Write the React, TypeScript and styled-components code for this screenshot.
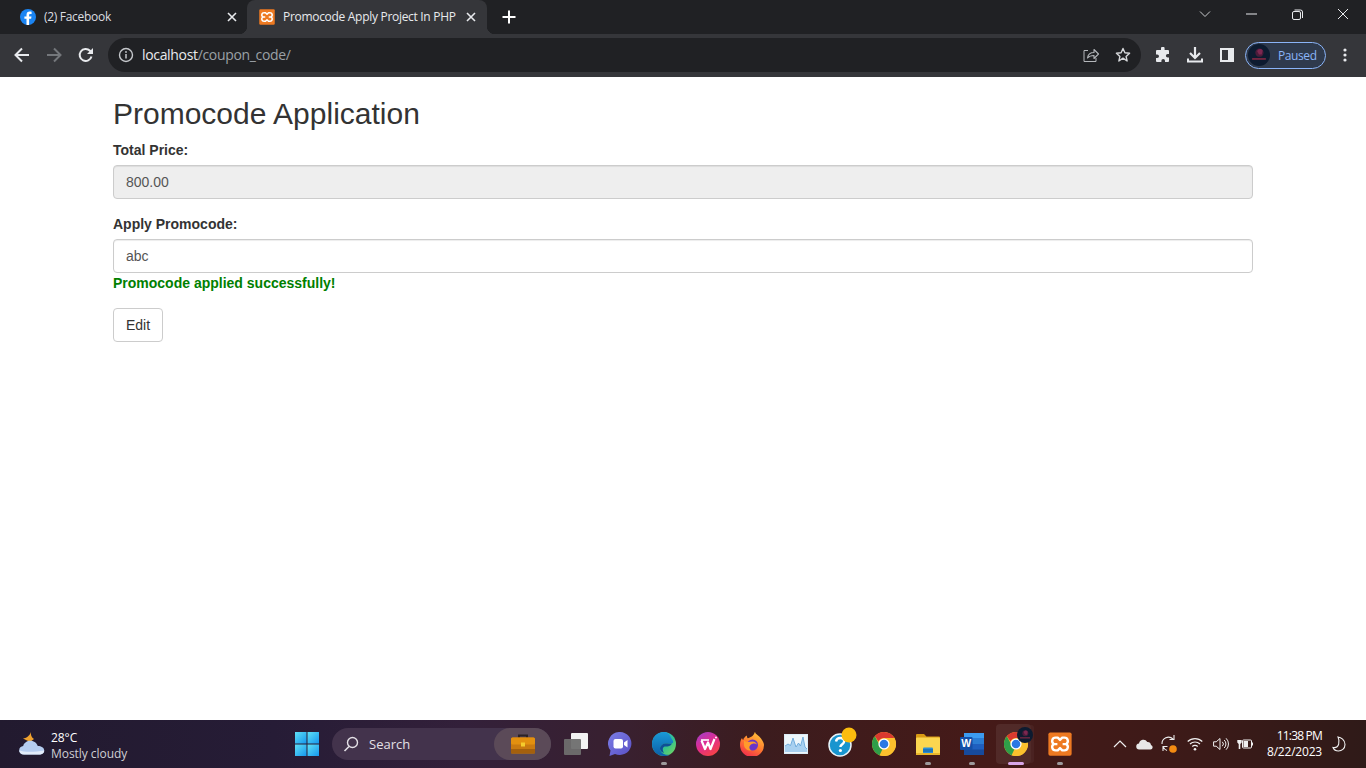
import React from 'react';
import styled, { createGlobalStyle } from 'styled-components';

const GlobalStyle = createGlobalStyle`
	html, body {
		margin: 0;
		padding: 0;
		background: #fff;
	}
	* {
		box-sizing: border-box;
	}
`;

const uiFont = `'Open Sans', 'Noto Sans', 'Liberation Sans', sans-serif`;

/* ---------- small drawings ---------- */

const XamppLogo = ({ size }: { size: number }) => (
	<svg width={size} height={size} viewBox="0 0 32 32">
		<rect x="0.5" y="0.5" width="31" height="31" rx="2.5" fill="#ee7a22" />
		<path
			d="M10 7.500h3l3 3 3-3h3c4.500 0 6 5.500 2.500 8.500 3.500 3 2 8.500-2.500 8.500h-3l-3-3-3 3h-3c-4.500 0-6-5.500-2.500-8.500C4 13 5.500 7.500 10 7.500z"
			fill="none"
			stroke="#fff"
			strokeWidth="3.200"
			strokeLinejoin="round"
		/>
		<path d="M7.500 16h5M19.500 16h5" stroke="#fff" strokeWidth="3" />
	</svg>
);

const FacebookLogo = () => (
	<svg width={16} height={16} viewBox="0 0 16 16">
		<circle cx="8" cy="8" r="8" fill="#1b84f2" />
		<path d="M9.100 16V9.800h2l.4-2.300H9.100V6.100c0-.8.3-1.200 1.200-1.200h1.300V2.800c-.5-.1-1.200-.2-1.900-.2-2 0-3.200 1.200-3.200 3.300v1.600H4.400v2.300h2.100V16z" fill="#fff" />
	</svg>
);

const ChromeLogo = ({ size }: { size: number }) => (
	<svg width={size} height={size} viewBox="0 0 24 24">
		<circle cx="12" cy="12" r="12" fill="#fbc02d" />
		<path d="M12 0a12 12 0 0 1 10.400 6H12a6 6 0 0 0-5.500 3.600L2.800 4.300A12 12 0 0 1 12 0z" fill="#d93a2f" />
		<path d="M2.800 4.300l4.700 8.400A5 5 0 0 0 10.500 17l-2.900 6.200A12 12 0 0 1 2.800 4.300z" fill="#2f9e48" />
		<path d="M7.600 23.200L12.800 18a6 6 0 0 0 4.400-9l-1-3h6.200A12 12 0 0 1 11 24a12 12 0 0 1-3.400-.8z" fill="#fbc02d" />
		<circle cx="12" cy="12" r="5.600" fill="#fff" />
		<circle cx="12" cy="12" r="4.300" fill="#2a78e4" />
	</svg>
);

const AvatarImage = ({ size }: { size: number }) => (
	<svg width={size} height={size} viewBox="0 0 24 24">
		<circle cx="12" cy="12" r="12" fill="#0d1b30" />
		<circle cx="12.500" cy="9.500" r="4.500" fill="#4a1c3a" />
		<path d="M10 8c1-3 4-3.500 6-1l-1 4.500h-3z" fill="#7d2750" />
		<rect x="4.500" y="15.500" width="15" height="1.600" fill="#8c2a46" />
	</svg>
);

const CloseGlyph = () => (
	<svg width={14} height={14} viewBox="0 0 14 14">
		<path d="M3 3l8 8M11 3l-8 8" stroke="#e8eaed" strokeWidth="1.600" />
	</svg>
);

const WeatherIcon = () => (
	<svg width={28} height={26} viewBox="0 0 28 26">
		<path d="M13 1c-.5 3 .5 5.500 3 7l-4 3-7-3.500c3-.2 6.500-2.500 8-6.500z" fill="#f0a22e" />
		<path d="M6 23.500c-3 0-4.800-2-4.800-4.300 0-2.300 1.800-4 4-4.200C6 11.800 9 9.800 12.500 9.800c3.600 0 6.300 2.300 7.300 5.200 3.500 0 6.400 1.600 6.400 4.400 0 2.500-2.300 4.100-5 4.100z" fill="#b5cdf0" />
		<path d="M6 23.500c-3 0-4.800-2-4.800-4.300 5 2 15 2 25 .2 0 2.500-2.300 4.100-5 4.100z" fill="#e2ecfa" />
	</svg>
);

const WindowsLogo = () => (
	<svg width={24} height={24} viewBox="0 0 24 24">
		<defs>
			<linearGradient id="winTile" x1="0" y1="0" x2="1" y2="1">
				<stop offset="0" stopColor="#5fe0f5" />
				<stop offset="1" stopColor="#1597ee" />
			</linearGradient>
		</defs>
		<rect x="0" y="0" width="11.500" height="11.500" fill="url(#winTile)" />
		<rect x="12.500" y="0" width="11.500" height="11.500" fill="url(#winTile)" />
		<rect x="0" y="12.500" width="11.500" height="11.500" fill="url(#winTile)" />
		<rect x="12.500" y="12.500" width="11.500" height="11.500" fill="url(#winTile)" />
	</svg>
);

const BriefcaseIcon = () => (
	<svg width={24} height={20} viewBox="0 0 24 20">
		<path d="M8 4V1.500h8V4" fill="none" stroke="#2b2226" strokeWidth="2" />
		<rect x="0" y="3.500" width="24" height="16" rx="1.500" fill="#c97a10" />
		<rect x="0" y="3.500" width="24" height="7" rx="1.500" fill="#e3900f" />
		<rect x="0" y="15" width="24" height="4.500" fill="#a4600d" />
		<rect x="10" y="8.500" width="4" height="4" fill="#f5cc2d" />
	</svg>
);

const TaskViewIcon = () => (
	<svg width={24} height={22} viewBox="0 0 24 22">
		<rect x="7" y="0" width="17" height="16" rx="1" fill="#f2f2f2" />
		<rect x="0" y="6" width="17" height="16" rx="1" fill="#6e6e6e" fillOpacity="0.95" />
	</svg>
);

const MeetIcon = () => (
	<svg width={24} height={24} viewBox="0 0 24 24">
		<defs>
			<linearGradient id="meetBg" x1="0" y1="0" x2="1" y2="1">
				<stop offset="0" stopColor="#7b7ee6" />
				<stop offset="1" stopColor="#5a4fc4" />
			</linearGradient>
		</defs>
		<path d="M12 0a11.500 11.500 0 1 1-5 21.900L1.500 24l1-5.500A11.500 11.500 0 0 1 12 0z" fill="url(#meetBg)" />
		<rect x="5.500" y="7" width="9.500" height="9.500" rx="2" fill="#fff" />
		<path d="M16 10.500l3.500-2.500v7.500L16 13z" fill="#fff" />
	</svg>
);

const EdgeIcon = () => (
	<svg width={24} height={24} viewBox="0 0 24 24">
		<defs>
			<linearGradient id="edgeTop" x1="0" y1="0" x2="1" y2="1">
				<stop offset="0" stopColor="#2bb3d9" />
				<stop offset="0.6" stopColor="#35c28d" />
				<stop offset="1" stopColor="#7ed957" />
			</linearGradient>
			<linearGradient id="edgeLow" x1="0" y1="0" x2="0" y2="1">
				<stop offset="0" stopColor="#1a9ad6" />
				<stop offset="1" stopColor="#0b5ea8" />
			</linearGradient>
		</defs>
		<circle cx="12" cy="12" r="12" fill="url(#edgeTop)" />
		<path d="M12 0C5 0 0 5.500 0 12c0 7 5.500 12 12 12 2.500 0 5-.7 6.500-1.800-5 1.800-10.500-1-10.500-5.700 0-3.300 3.500-5.500 7.500-5 2 .3 4 .5 5.300-.5 1-1 0-3-1.300-4.500C17.500 1.500 15 0 12 0z" fill="url(#edgeLow)" />
		<path d="M8 16.500c0-3.300 3.500-5.500 7.500-5 1.700.2 3 .4 4.300 0-.5 2.500-4 3-6.300 3-2.500 0-3.800 2.500-1.500 6.500-2.500-.8-4-2.500-4-4.500z" fill="#0f4f96" />
	</svg>
);

const WpsIcon = () => (
	<svg width={24} height={24} viewBox="0 0 24 24">
		<defs>
			<linearGradient id="wpsBg" x1="0" y1="0" x2="0.6" y2="1">
				<stop offset="0" stopColor="#9a3fd0" />
				<stop offset="0.55" stopColor="#e12c8e" />
				<stop offset="1" stopColor="#f5414a" />
			</linearGradient>
		</defs>
		<circle cx="12" cy="12" r="12" fill="url(#wpsBg)" />
		<path d="M5.500 8.500L9 17l3-6.500L14.500 17 18.500 7" fill="none" stroke="#fff" strokeWidth="2.200" strokeLinejoin="round" />
		<path d="M5 8h8" stroke="#fff" strokeWidth="1.600" />
		<circle cx="20" cy="5.500" r="1" fill="#fff" />
	</svg>
);

const FirefoxIcon = () => (
	<svg width={24} height={24} viewBox="0 0 24 24">
		<defs>
			<linearGradient id="foxBody" x1="0.7" y1="0" x2="0.2" y2="1">
				<stop offset="0" stopColor="#ffc53a" />
				<stop offset="0.5" stopColor="#ff7a2f" />
				<stop offset="1" stopColor="#f0264f" />
			</linearGradient>
		</defs>
		<path d="M15 0c.5 2.500 4 3.500 6 6.500 2 3 3 5 3 6.500a12 12 0 0 1-24 0c0-3 .8-5.500 2-7 .2 1 .6 1.700 1.200 2 .5-2 1.800-3.500 3.800-4.500-.3 1.200 0 2 .7 2.700 2.800-.7 6-2 7.300-6.700z" fill="url(#foxBody)" />
		<circle cx="12.500" cy="13" r="5.500" fill="#6a35c9" />
		<path d="M4 8c2 3 5 1.500 8.500 1.500 2.500 0 4 1.500 4.500 3-2-1.500-5-1-6.500.5-2 2-1 4.500 1 5.500-4 .5-7-2-7.500-5z" fill="#ff9a2c" />
	</svg>
);

const ChartAppIcon = () => (
	<svg width={24} height={20} viewBox="0 0 24 20">
		<rect x="0" y="0" width="24" height="20" fill="#dcecf7" />
		<rect x="1" y="1" width="22" height="18" fill="#eef6fb" />
		<path d="M1 17V12l3-2 2.500 1.500L9 4l3 9 2.500-4 2 3L19 3l2 10 2 2v3H1z" fill="#a8d0f0" />
		<path d="M1 12l3-2 2.500 1.500L9 4l3 9 2.500-4 2 3L19 3l2 10 2 2" fill="none" stroke="#5d9fd6" strokeWidth="0.800" />
	</svg>
);

const HelpIcon = () => (
	<svg width={30} height={30} viewBox="0 0 30 30" style={{ overflow: 'visible' }}>
		<circle cx="15" cy="16" r="11" fill="#1895cf" stroke="#e8f3f8" strokeWidth="1.500" />
		<path d="M11 12.500c.4-2.500 2.100-3.500 4.200-3.500 2.400 0 4 1.400 4 3.300 0 2.800-3.800 3-3.800 5.700" fill="none" stroke="#fff" strokeWidth="2.400" />
		<circle cx="15.400" cy="21.500" r="1.600" fill="#fff" />
		<circle cx="24" cy="6" r="7.500" fill="#fbbc0e" />
	</svg>
);

const FolderIcon = () => (
	<svg width={24} height={22} viewBox="0 0 24 22">
		<path d="M0 2a1 1 0 0 1 1-1h7l2.500 2.500H23a1 1 0 0 1 1 1V8H0z" fill="#d99a14" />
		<rect x="0" y="4.500" width="24" height="17.500" rx="1" fill="#fbd650" />
		<rect x="7" y="14.500" width="10" height="7.500" rx="1" fill="#2b8fd8" />
		<rect x="0" y="20" width="24" height="2" fill="#e8b52c" />
		<rect x="7" y="16" width="10" height="3" fill="#1d76bd" />
	</svg>
);

const WordIcon = () => (
	<svg width={24} height={22} viewBox="0 0 24 22">
		<rect x="4" y="0" width="20" height="22" rx="1" fill="#1f5fbf" />
		<rect x="4" y="0" width="20" height="5.500" fill="#3c9bf0" />
		<rect x="4" y="5.500" width="20" height="5.500" fill="#2b7cd3" />
		<rect x="4" y="16.500" width="20" height="5.500" fill="#174a9c" />
		<rect x="0" y="4" width="12.500" height="13" rx="1" fill="#134fa8" />
		<text x="6.200" y="14.300" fontFamily="'Liberation Sans', sans-serif" fontSize="10.500" fontWeight="700" fill="#fff" textAnchor="middle">
			W
		</text>
	</svg>
);

/* ---------- browser chrome ---------- */

const Chrome = styled.header`
	flex: none;
	font-family: ${uiFont};
`;

const TabStrip = styled.div`
	display: flex;
	align-items: stretch;
	height: 34px;
	background: #202124;
`;

const Tab = styled.div<{ $active?: boolean }>`
	position: relative;
	display: flex;
	align-items: center;
	width: ${(p) => (p.$active ? '240px' : '247px')};
	padding: ${(p) => (p.$active ? '0 9px 0 12px' : '0 8px 0 20px')};
	background: ${(p) => (p.$active ? '#35363a' : 'transparent')};
	border-radius: 8px 8px 0 0;
	color: ${(p) => (p.$active ? '#e8eaed' : '#dcdee1')};
	font-size: 12px;

	&::before,
	&::after {
		content: '';
		display: ${(p) => (p.$active ? 'block' : 'none')};
		position: absolute;
		bottom: 0;
		width: 8px;
		height: 8px;
	}

	&::before {
		left: -8px;
		background: radial-gradient(circle at 0 0, transparent 8px, #35363a 8.5px);
	}

	&::after {
		right: -8px;
		background: radial-gradient(circle at 100% 0, transparent 8px, #35363a 8.5px);
	}
`;

const TabTitle = styled.span`
	flex: 1;
	margin-left: 8px;
	padding-bottom: 1px;
	letter-spacing: -0.3px;
	white-space: nowrap;
	overflow: hidden;
`;

const NewTab = styled.div`
	display: flex;
	align-items: center;
	margin-left: 14px;
`;

const WindowControls = styled.div`
	display: flex;
	margin-left: auto;
`;

const WindowButton = styled.div`
	display: flex;
	align-items: center;
	justify-content: center;
	width: 46px;
	padding-bottom: 6px;
`;

const Toolbar = styled.div`
	display: flex;
	align-items: center;
	height: 43px;
	padding: 0 5px 1px 6px;
	background: #35363a;
`;

const ToolButton = styled.div`
	display: flex;
	flex: none;
	align-items: center;
	justify-content: center;
	width: 32px;
	height: 32px;
`;

const Omnibox = styled.div`
	display: flex;
	flex: 1;
	align-items: center;
	height: 34px;
	margin: 0 6px;
	padding: 0 2px 0 10px;
	border-radius: 17px;
	background: #202124;
`;

const Url = styled.div`
	flex: 1;
	margin-left: 8px;
	padding-bottom: 2px;
	font-size: 14px;
	letter-spacing: -0.33px;
	color: #9aa0a6;
	white-space: nowrap;
`;

const UrlHost = styled.span`
	color: #e8eaed;
`;

const ProfileChip = styled.div`
	display: flex;
	flex: none;
	align-items: center;
	gap: 8px;
	width: 81px;
	height: 27px;
	margin: 0 3px 0 2px;
	padding-left: 2px;
	border: 1px solid #8ab4f8;
	border-radius: 14px;
	background: #2f3a4c;
	color: #8ab4f8;
	font-size: 12px;
	letter-spacing: -0.4px;
`;

/* ---------- page ---------- */

const Viewport = styled.div`
	display: flex;
	flex-direction: column;
	height: 768px;
	overflow: hidden;
`;

const Content = styled.main`
	flex: 1;
	background: #fff;
	font-family: 'Liberation Sans', Arial, sans-serif;
	font-size: 14px;
	line-height: 20px;
	color: #333;
`;

const Container = styled.div`
	width: 1170px;
	margin: 0 auto;
	padding: 0 15px;
`;

const Title = styled.h2`
	margin: 20px 0 10px;
	font-size: 30px;
	font-weight: 500;
	line-height: 33px;
	color: #333;
`;

const Group = styled.div`
	margin-bottom: 15px;
`;

const Label = styled.label`
	display: inline-block;
	margin-bottom: 5px;
	font-weight: 700;
`;

const Input = styled.input`
	display: block;
	width: 100%;
	height: 34px;
	padding: 6px 12px;
	border: 1px solid #ccc;
	border-radius: 4px;
	background: #fff;
	box-shadow: inset 0 1px 1px rgba(0, 0, 0, 0.075);
	font-family: inherit;
	font-size: 14px;
	line-height: 20px;
	color: #555;

	&:disabled {
		background: #eee;
		opacity: 1;
	}
`;

const Success = styled.div`
	font-weight: 700;
	color: green;
`;

const Button = styled.button`
	display: inline-block;
	height: 34px;
	padding: 6px 12px;
	border: 1px solid #ccc;
	border-radius: 4px;
	background: #fff;
	font-family: inherit;
	font-size: 14px;
	line-height: 20px;
	color: #333;
`;

/* ---------- taskbar ---------- */

const Taskbar = styled.footer`
	display: flex;
	flex: none;
	align-items: center;
	height: 48px;
	background: linear-gradient(90deg, #221a2f 0%, #261c36 20%, #33203a 34%, #39202f 46%, #3c1c1e 56%, #451a18 72%, #3d1a18 86%, #2f1a18 100%);
	font-family: ${uiFont};
	color: #fff;
`;

const Weather = styled.div`
	display: flex;
	flex: none;
	align-items: center;
	gap: 5px;
	width: 285px;
	padding-left: 18px;
`;

const WeatherText = styled.div`
	padding-top: 3px;
	font-size: 12px;
	line-height: 16px;
	letter-spacing: -0.05px;
`;

const WeatherSub = styled.div`
	color: #cfcfd4;
`;

const TaskIcon = styled.div<{ $running?: boolean; $active?: boolean }>`
	position: relative;
	display: flex;
	flex: none;
	align-items: center;
	justify-content: center;
	width: 44px;
	height: 44px;

	&::before {
		content: '';
		display: ${(p) => (p.$active ? 'block' : 'none')};
		position: absolute;
		top: 2px;
		left: 2px;
		width: 35px;
		height: 40px;
		border-radius: 4px;
		background: rgba(255, 255, 255, 0.07);
		box-shadow: 4px 0 0 -1px rgba(255, 255, 255, 0.04);
	}

	&::after {
		content: '';
		display: ${(p) => (p.$running || p.$active ? 'block' : 'none')};
		position: absolute;
		left: 50%;
		bottom: 1px;
		width: ${(p) => (p.$active ? '16px' : '6px')};
		height: 3px;
		margin-left: ${(p) => (p.$active ? '-8px' : '-3px')};
		border-radius: 2px;
		background: ${(p) => (p.$active ? '#d8a6e8' : '#9d9a9c')};
	}

	svg {
		position: relative;
	}
`;

const IconBadge = styled.div`
	position: absolute;
	top: 5px;
	right: 5px;
	line-height: 0;
`;

const SearchBox = styled.div`
	display: flex;
	flex: none;
	align-items: center;
	width: 219px;
	height: 32px;
	margin: 0 3px;
	padding-left: 11px;
	border-radius: 16px;
	background: #43334c;
	color: #e4e0e6;
	font-size: 13px;
`;

const SearchLabel = styled.span`
	flex: 1;
	margin-left: 10px;
`;

const SearchHighlight = styled.div`
	display: flex;
	align-items: center;
	justify-content: center;
	width: 57px;
	height: 32px;
	border-radius: 16px;
	background: #5b4a58;
`;

const Tray = styled.div`
	display: flex;
	flex: 1;
	align-items: center;
	padding-left: 26px;
`;

const TrayIcon = styled.div<{ $w: number }>`
	display: flex;
	flex: none;
	align-items: center;
	justify-content: center;
	width: ${(p) => p.$w}px;
`;

const Clock = styled.div`
	flex: none;
	width: 65px;
	font-size: 12px;
	line-height: 16px;
	letter-spacing: -0.2px;
	text-align: right;
`;

const ClockTime = styled.div`
	letter-spacing: -0.8px;
`;

const App = () => {
	return (
		<Viewport>
			<GlobalStyle />
			<Chrome>
				<TabStrip>
					<Tab>
						<FacebookLogo />
						<TabTitle>(2) Facebook</TabTitle>
						<CloseGlyph />
					</Tab>
					<Tab $active>
						<XamppLogo size={16} />
						<TabTitle>Promocode Apply Project In PHP</TabTitle>
						<CloseGlyph />
					</Tab>
					<NewTab>
						<svg width={16} height={16} viewBox="0 0 16 16">
							<path d="M8 1.500v13M1.500 8h13" stroke="#fff" strokeWidth="2" />
						</svg>
					</NewTab>
					<WindowControls>
						<WindowButton>
							<svg width={12} height={8} viewBox="0 0 12 8">
								<path d="M1 1.500l5 5 5-5" fill="none" stroke="#c8cacd" strokeWidth="1" />
							</svg>
						</WindowButton>
						<WindowButton>
							<svg width={11} height={2} viewBox="0 0 11 2">
								<path d="M0 1h11" stroke="#e8eaed" strokeWidth="1" />
							</svg>
						</WindowButton>
						<WindowButton>
							<svg width={11} height={11} viewBox="0 0 11 11">
								<rect x="0.500" y="2.500" width="8" height="8" rx="1.500" fill="none" stroke="#e8eaed" />
								<path d="M2.500 1h6a2 2 0 0 1 2 2v6" fill="none" stroke="#e8eaed" />
							</svg>
						</WindowButton>
						<WindowButton>
							<svg width={12} height={12} viewBox="0 0 12 12">
								<path d="M1 1l10 10M11 1L1 11" stroke="#e8eaed" strokeWidth="1" />
							</svg>
						</WindowButton>
					</WindowControls>
				</TabStrip>
				<Toolbar>
					<ToolButton>
						<svg width={16} height={16} viewBox="0 0 16 16">
							<path d="M15 8H2M8 1.500L1.500 8 8 14.500" fill="none" stroke="#e8eaed" strokeWidth="2" />
						</svg>
					</ToolButton>
					<ToolButton>
						<svg width={16} height={16} viewBox="0 0 16 16">
							<path d="M1 8h13M8 1.500L14.500 8 8 14.500" fill="none" stroke="#74777b" strokeWidth="2" />
						</svg>
					</ToolButton>
					<ToolButton>
						<svg width={16} height={16} viewBox="0 0 16 16">
							<path d="M13.500 9.500A6 6 0 1 1 12 3.800L14 6" fill="none" stroke="#e8eaed" strokeWidth="2" />
							<path d="M15 1v6H9z" fill="#e8eaed" />
						</svg>
					</ToolButton>
					<Omnibox>
						<svg width={16} height={16} viewBox="0 0 16 16">
							<circle cx="8" cy="8" r="6.500" fill="none" stroke="#c4c7cb" strokeWidth="1.400" />
							<path d="M8 7v4.500" stroke="#c4c7cb" strokeWidth="1.500" />
							<circle cx="8" cy="5" r="0.900" fill="#c4c7cb" />
						</svg>
						<Url>
							<UrlHost>localhost</UrlHost>/coupon_code/
						</Url>
						<ToolButton>
							<svg width={16} height={16} viewBox="0 0 16 16">
								<path d="M5 3.500H1v11h12v-3.500" fill="none" stroke="#b4b7bb" strokeWidth="1" />
								<path d="M4.500 11c.5-3.500 3-5.500 6.500-5.500V2.500l4.500 4.500-4.500 4.500V8.500C8 8.500 6 9.300 4.500 11z" fill="none" stroke="#b4b7bb" strokeWidth="1.100" strokeLinejoin="round" />
							</svg>
						</ToolButton>
						<ToolButton>
							<svg width={16} height={16} viewBox="0 0 16 16">
								<path d="M8 1.500l1.900 4.300 4.700.5-3.500 3.100 1 4.600L8 11.200l-4.100 2.800 1-4.600L1.400 6.300l4.700-.5z" fill="none" stroke="#d6d8db" strokeWidth="1.400" strokeLinejoin="round" />
							</svg>
						</ToolButton>
					</Omnibox>
					<ToolButton>
						<svg width={16} height={16} viewBox="0 0 16 16">
							<path d="M6 1.500a1.800 1.800 0 0 1 3.600 0V3h3.400a1 1 0 0 1 1 1v3h-1.300a1.800 1.800 0 0 0 0 3.600H14V14a1 1 0 0 1-1 1h-3v-1.300a1.800 1.800 0 0 0-3.600 0V15H2a1 1 0 0 1-1-1v-3h1.200a1.800 1.800 0 0 0 0-3.600H1V4a1 1 0 0 1 1-1h4z" fill="#e8eaed" />
						</svg>
					</ToolButton>
					<ToolButton>
						<svg width={16} height={16} viewBox="0 0 16 16">
							<path d="M8 0v10.500M3 6l5 5 5-5" fill="none" stroke="#e8eaed" strokeWidth="2.200" />
							<path d="M1 11.500v3h14v-3" fill="none" stroke="#e8eaed" strokeWidth="2" />
						</svg>
					</ToolButton>
					<ToolButton>
						<svg width={14} height={14} viewBox="0 0 14 14">
							<rect x="1" y="1" width="12" height="12" fill="none" stroke="#e8eaed" strokeWidth="2" />
							<rect x="8" y="1" width="5" height="12" fill="#e8eaed" />
						</svg>
					</ToolButton>
					<ProfileChip>
						<AvatarImage size={22} />
						Paused
					</ProfileChip>
					<ToolButton>
						<svg width={4} height={14} viewBox="0 0 4 14">
							<circle cx="2" cy="2" r="1.600" fill="#e8eaed" />
							<circle cx="2" cy="7" r="1.600" fill="#e8eaed" />
							<circle cx="2" cy="12" r="1.600" fill="#e8eaed" />
						</svg>
					</ToolButton>
				</Toolbar>
			</Chrome>

			<Content>
				<Container>
					<Title>Promocode Application</Title>
					<Group>
						<Label>Total Price:</Label>
						<Input disabled defaultValue="800.00" />
					</Group>
					<Group>
						<Label>Apply Promocode:</Label>
						<Input defaultValue="abc" />
						<Success>Promocode applied successfully!</Success>
					</Group>
					<Button>Edit</Button>
				</Container>
			</Content>

			<Taskbar>
				<Weather>
					<WeatherIcon />
					<WeatherText>
						28°C
						<WeatherSub>Mostly cloudy</WeatherSub>
					</WeatherText>
				</Weather>
				<TaskIcon>
					<WindowsLogo />
				</TaskIcon>
				<SearchBox>
					<svg width={16} height={16} viewBox="0 0 16 16">
						<circle cx="9.500" cy="6.500" r="5" fill="none" stroke="#e4e0e6" strokeWidth="1.400" />
						<path d="M6 10.500L1.500 15" stroke="#e4e0e6" strokeWidth="1.600" />
					</svg>
					<SearchLabel>Search</SearchLabel>
					<SearchHighlight>
						<BriefcaseIcon />
					</SearchHighlight>
				</SearchBox>
				<TaskIcon>
					<TaskViewIcon />
				</TaskIcon>
				<TaskIcon>
					<MeetIcon />
				</TaskIcon>
				<TaskIcon $running>
					<EdgeIcon />
				</TaskIcon>
				<TaskIcon>
					<WpsIcon />
				</TaskIcon>
				<TaskIcon>
					<FirefoxIcon />
				</TaskIcon>
				<TaskIcon>
					<ChartAppIcon />
				</TaskIcon>
				<TaskIcon>
					<HelpIcon />
				</TaskIcon>
				<TaskIcon>
					<ChromeLogo size={24} />
				</TaskIcon>
				<TaskIcon $running>
					<FolderIcon />
				</TaskIcon>
				<TaskIcon $running>
					<WordIcon />
				</TaskIcon>
				<TaskIcon $active>
					<ChromeLogo size={24} />
					<IconBadge>
						<AvatarImage size={16} />
					</IconBadge>
				</TaskIcon>
				<TaskIcon $running>
					<XamppLogo size={24} />
				</TaskIcon>
				<Tray>
					<TrayIcon $w={24}>
						<svg width={14} height={8} viewBox="0 0 14 8">
							<path d="M1 7l6-6 6 6" fill="none" stroke="#f0f0f0" strokeWidth="1.200" />
						</svg>
					</TrayIcon>
					<TrayIcon $w={25}>
						<svg width={17} height={12} viewBox="0 0 17 12">
							<path d="M3.500 11.500a3 3 0 0 1-.5-6 4.500 4.500 0 0 1 8.300-1.500 3.500 3.500 0 0 1 3.700 3 2.300 2.300 0 0 1-.5 4.500z" fill="#e8e8e8" />
						</svg>
					</TrayIcon>
					<TrayIcon $w={24}>
						<svg width={18} height={20} viewBox="0 0 18 20">
							<path d="M2 10a6.500 6.500 0 0 1 11-5M14 1v4.500H9.500" fill="none" stroke="#ececec" strokeWidth="1.100" />
							<path d="M3 17v-4.500h4.500M3 12.500a6.500 6.500 0 0 0 4 4" fill="none" stroke="#ececec" strokeWidth="1.100" />
							<circle cx="13" cy="15" r="3.800" fill="#f58b12" />
						</svg>
					</TrayIcon>
					<TrayIcon $w={28}>
						<svg width={16} height={14} viewBox="0 0 16 14">
							<path d="M.7 4.500a10.500 10.500 0 0 1 14.600 0M3 7a7.200 7.200 0 0 1 10 0M5.300 9.500a3.800 3.800 0 0 1 5.400 0" fill="none" stroke="#f0f0f0" strokeWidth="1.200" />
							<circle cx="8" cy="12.300" r="1.300" fill="#f0f0f0" />
						</svg>
					</TrayIcon>
					<TrayIcon $w={24}>
						<svg width={16} height={14} viewBox="0 0 16 14">
							<path d="M.6 4.800h2.600L7 1.500v11L3.200 9.200H.6z" fill="none" stroke="#f0f0f0" strokeWidth="1" />
							<path d="M9.300 4.800a3 3 0 0 1 0 4.400M11.200 3a5.500 5.500 0 0 1 0 8M13.100 1.300a8 8 0 0 1 0 11.400" fill="none" stroke="#f0f0f0" strokeWidth="1" />
						</svg>
					</TrayIcon>
					<TrayIcon $w={24}>
						<svg width={16} height={14} viewBox="0 0 16 14">
							<path d="M1.500 0v3M3.500 0v3M.3 3h4.400v2.500L3.300 7v5H1.700V7L.3 5.500z" fill="#f0f0f0" />
							<rect x="5.500" y="3" width="9" height="8" rx="1" fill="none" stroke="#f0f0f0" />
							<rect x="6.500" y="4" width="4.500" height="6" fill="#f0f0f0" />
							<rect x="15" y="5.500" width="1" height="3" fill="#f0f0f0" />
						</svg>
					</TrayIcon>
					<Clock>
						<ClockTime>11:38 PM</ClockTime>
						<div>8/22/2023</div>
					</Clock>
					<TrayIcon $w={34}>
						<svg width={14} height={16} viewBox="0 0 14 16">
							<path d="M6 1c3 .3 7 3 7 7.500S9.500 15 6.500 15C4 15 2 14 1 11.500c3 .5 5-1 5.700-3.500C7.300 5.800 7 3 6 1z" fill="none" stroke="#f0f0f0" strokeWidth="1.100" />
						</svg>
					</TrayIcon>
				</Tray>
			</Taskbar>
		</Viewport>
	);
};

export default App;
